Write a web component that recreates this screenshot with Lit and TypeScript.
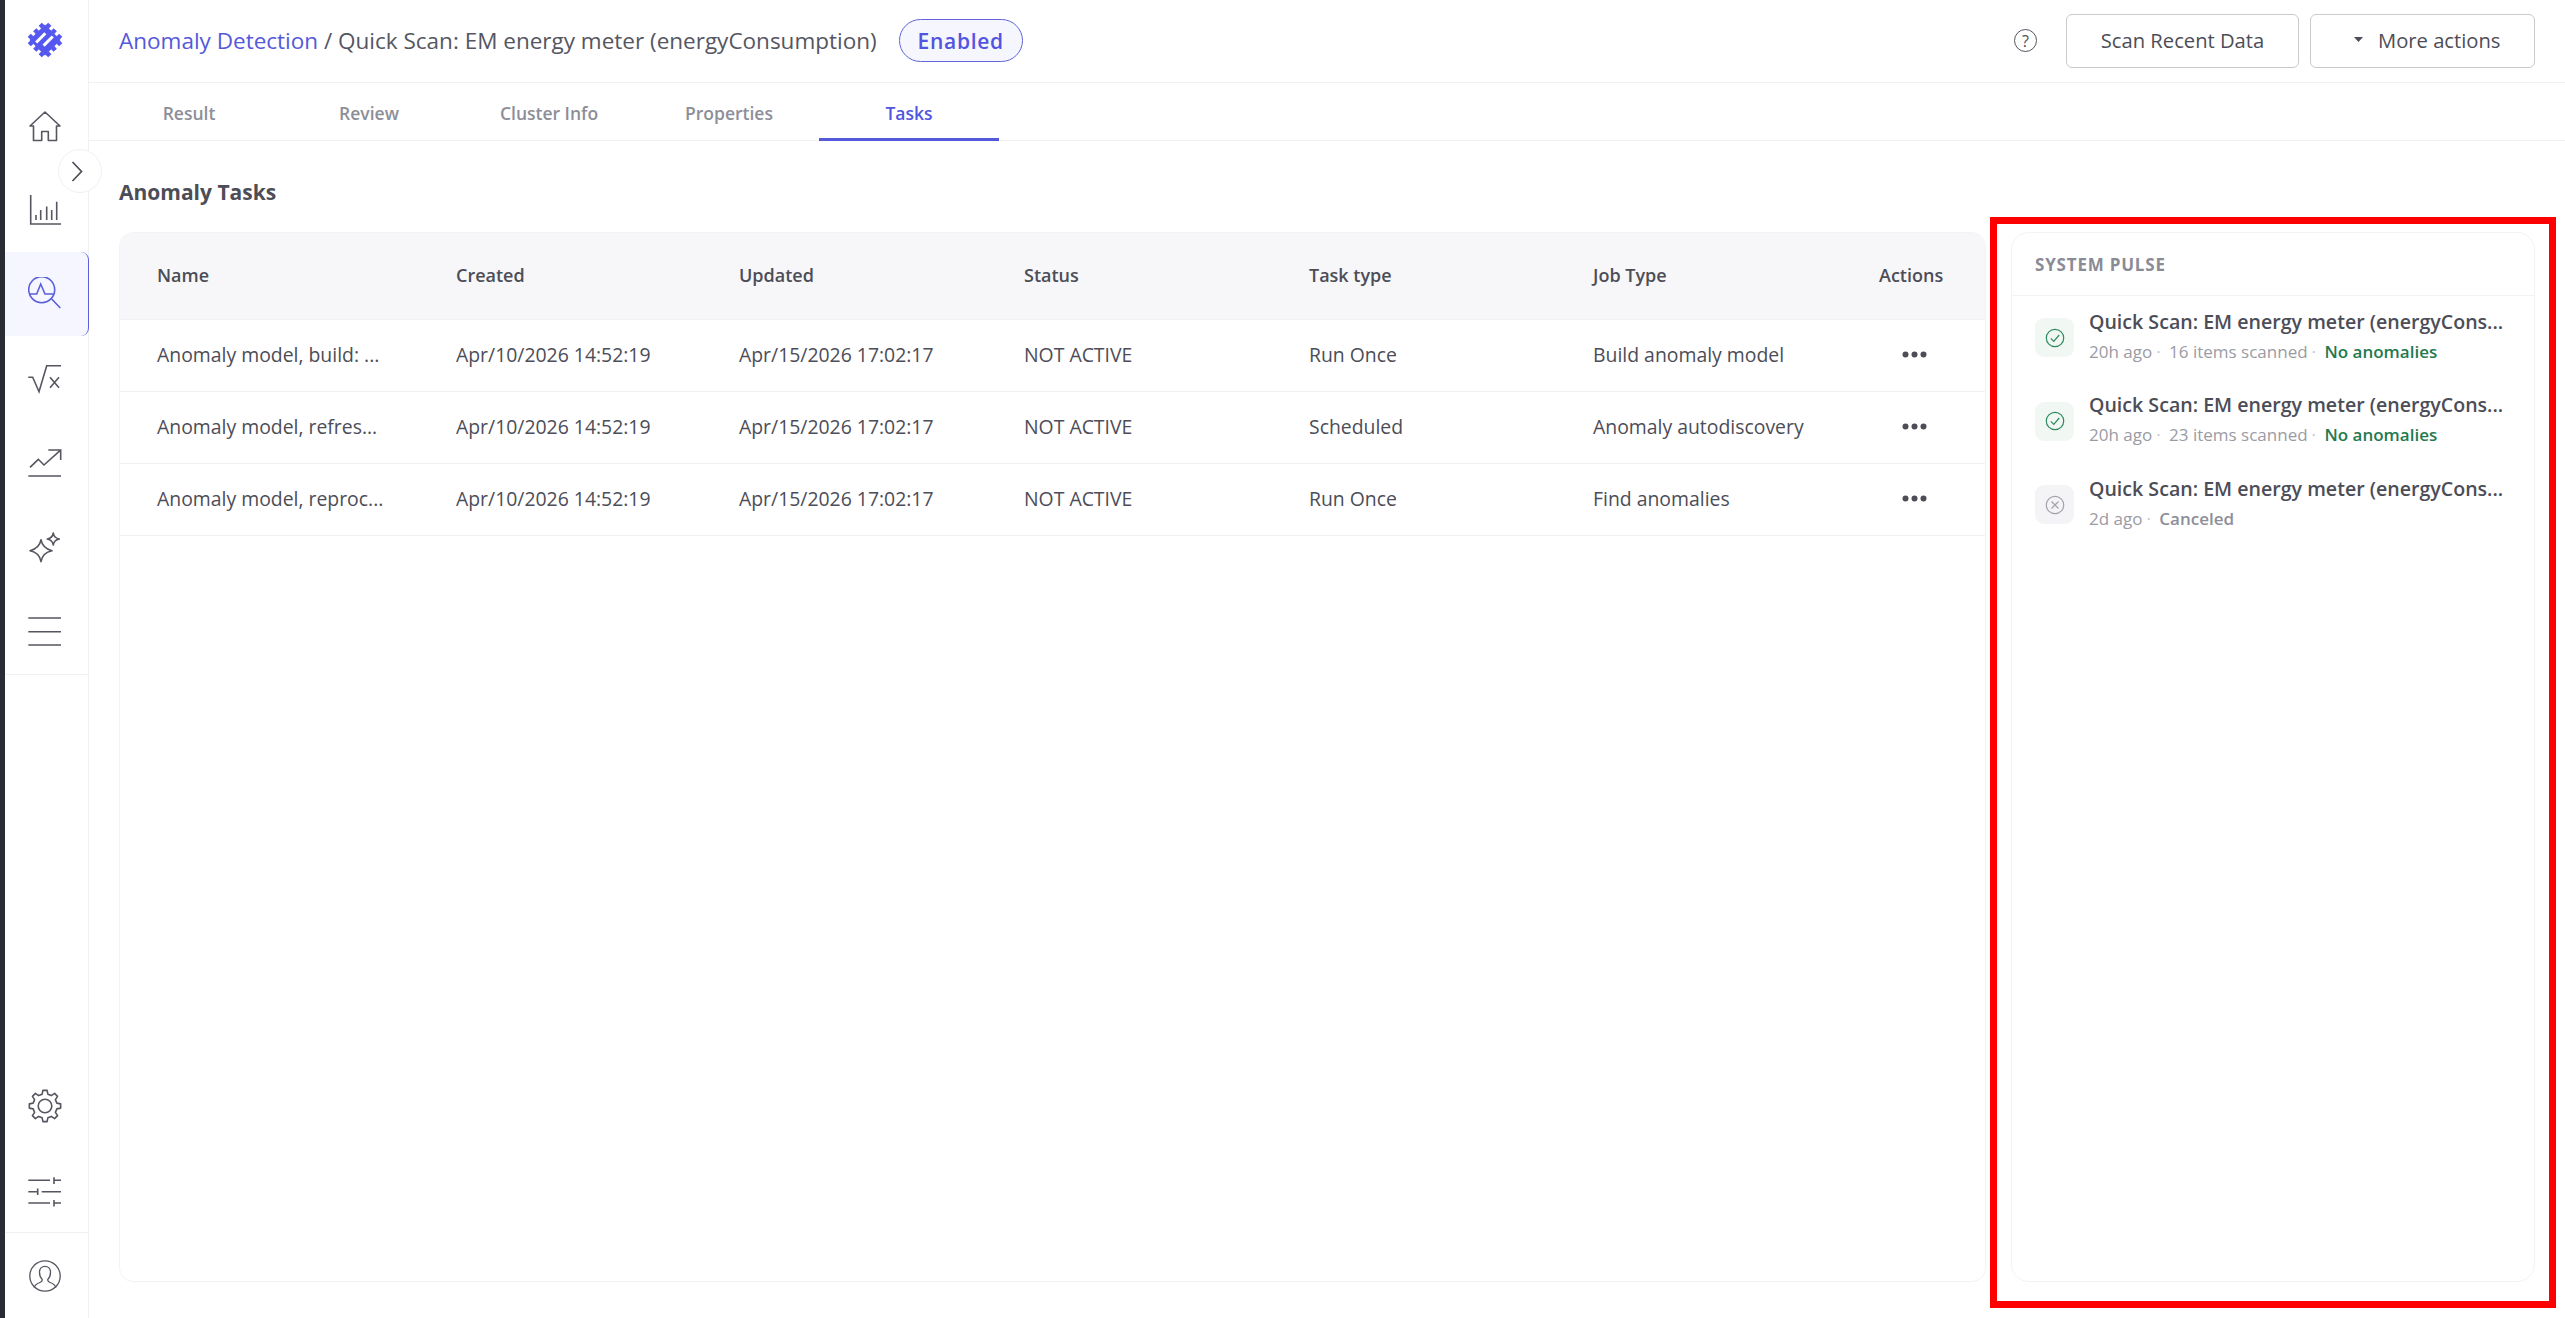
import { LitElement, html, css, svg } from 'lit';
import { customElement } from 'lit/decorators.js';

const TASKS = [
  { name: 'Anomaly model, build: ...', task: 'Run Once', job: 'Build anomaly model' },
  { name: 'Anomaly model, refres...', task: 'Scheduled', job: 'Anomaly autodiscovery' },
  { name: 'Anomaly model, reproc...', task: 'Run Once', job: 'Find anomalies' },
];

const PULSE = [
  { time: '20h ago', items: '16 items scanned', result: 'No anomalies', ok: true },
  { time: '20h ago', items: '23 items scanned', result: 'No anomalies', ok: true },
  { time: '2d ago', items: '', result: 'Canceled', ok: false },
];

// gear outline, 8 teeth around (17, 17)
function gearPath() {
  const pts: string[] = [];
  const n = 8;
  for (let i = 0; i < n; i++) {
    const a = (i / n) * Math.PI * 2 - Math.PI / 2;
    const step = (Math.PI * 2) / n;
    const spots: [number, number][] = [
      [12.2, a - step * 0.3],
      [15.8, a - step * 0.17],
      [15.8, a + step * 0.17],
      [12.2, a + step * 0.3],
    ];
    for (const [r, t] of spots) {
      pts.push(`${(17 + r * Math.cos(t)).toFixed(2)} ${(17 + r * Math.sin(t)).toFixed(2)}`);
    }
  }
  return 'M' + pts.join('L') + 'Z';
}

const icon = (body: unknown) => html`<svg class="nav-icon" viewBox="0 0 34 34" width="34" height="34" fill="none" stroke="currentColor" stroke-width="1.6">${body}</svg>`;

const ICONS = {
  home: icon(svg`<path d="M5.500 17H2L17 3l15 14h-3.500v14.500h-8.200v-9h-6.600v9H5.500z" stroke-linejoin="round" />`),
  chart: icon(svg`<path d="M2.700 2v29H33M8 27v-5M12.700 27V17M18.700 27V13.500M23.700 27V17M28.700 27V8.700" />`),
  search: icon(svg`<circle cx="13.700" cy="12.700" r="13" /><path d="M1.300 17h7.400l4-10 4.300 10h8.300M23.700 22l8.600 9" />`),
  sqrt: icon(svg`<path d="M.3 16.300h4.400L11 30.700l7.700-26H33M22 16.300l9 10.400M31 16.300 22 26.700" />`),
  trend: icon(svg`<path d="M.3 31H33M2 22.300l8.300-8 5.700 5.700L32 5.700M20.300 5h12.400v10" />`),
  sparkle: icon(svg`<path d="M13 10.700Q14.500 19.500 24 21.700 14.500 23.500 13 32.700 11.500 23.500 2 21.700 11.500 19.500 13 10.700zM25.300 4Q26 9 31.300 10 26 11 25.300 16 24.500 11 19.300 10 24.500 9 25.300 4z" stroke-linejoin="round" />`),
  menu: icon(svg`<path d="M.3 5H33M.3 18.700H33M.3 32H33" />`),
  gear: icon(svg`<path d=${gearPath()} stroke-linejoin="round" /><circle cx="17" cy="17" r="6.800" />`),
  sliders: icon(svg`<path d="M.3 6.300H22M26 3.300v6.600M26 6.300h7M.3 17.700h9.400M9.700 14.500v6.400M13.700 17.700H33M.3 29H22M26 26v6.600M26 29h7" />`),
  user: icon(svg`<circle cx="17" cy="17" r="15.200" stroke-width="1.300" /><path d="M6 28.500c1-3 3-4 6-5 2-.7 2.500-1.500 2.200-3-1.500-1.500-2.700-4-2.700-7.200 0-3.500 2.300-6 5.500-6s5.500 2.500 5.500 6c0 3.200-1.200 5.700-2.700 7.200-.3 1.500.2 2.300 2.200 3 3 1 5 2 6 5" stroke-width="1.300" />`),
};

@customElement('app-root')
export class AppRoot extends LitElement {
  static styles = css`
    :host {
      display: block;
      position: relative;
      height: 100vh;
      overflow: hidden;
      background: #fff;
      color: #4c4d57;
      font-family: 'Open Sans', sans-serif;
      font-size: 19.4px;
    }

    .app {
      display: flex;
      height: 100%;
    }

    .rail {
      width: 5px;
      flex: none;
      background: #2a2c33;
    }

    /* sidebar */
    .sidebar {
      width: 84px;
      flex: none;
      display: flex;
      flex-direction: column;
      border-right: 1px solid #f1f1f3;
      box-sizing: border-box;
      color: #55565f;
    }

    .logo {
      height: 84px;
      flex: none;
      display: flex;
      align-items: center;
      justify-content: center;
      padding: 0 3px 4px 0;
      box-sizing: border-box;
    }

    .nav {
      border-bottom: 1px solid #f1f1f3;
      padding-bottom: 2px;
    }

    .nav-item {
      height: 84px;
      display: flex;
      align-items: center;
      justify-content: center;
      padding-right: 3px;
      box-sizing: border-box;
    }

    .nav-item.active {
      background: #f5f6ff;
      color: #5a5fd8;
      border-right: 1.5px solid #5a5fd8;
      border-radius: 0 8px 8px 0;
      margin-right: -1px;
      padding-right: 2.5px;
    }

    .spacer {
      flex: 1;
    }

    .gear-item {
      padding-bottom: 2px;
    }

    .bottom-item {
      border-bottom: 1px solid #f1f1f3;
    }

    .bottom-item.last {
      border-bottom: none;
      height: 85px;
    }

    .collapse {
      position: absolute;
      left: 58px;
      top: 149px;
      width: 44px;
      height: 44px;
      padding-right: 6px;
      border-radius: 50%;
      border: 1px solid #f0f0f2;
      background: #fff;
      box-sizing: border-box;
      display: flex;
      align-items: center;
      justify-content: center;
      color: #4c4d57;
    }

    /* main */
    .main {
      flex: 1;
      min-width: 0;
      display: flex;
      flex-direction: column;
    }

    .header {
      height: 83px;
      flex: none;
      display: flex;
      align-items: center;
      padding: 0 30px 1px;
      border-bottom: 1px solid #f1f1f3;
      box-sizing: border-box;
    }

    .crumb {
      font-size: 22.5px;
      white-space: nowrap;
      color: #55565f;
      margin-top: -1px;
    }

    .crumb a {
      color: #5459d9;
    }

    .pill {
      margin-left: 22px;
      height: 43px;
      width: 124px;
      display: flex;
      align-items: center;
      justify-content: center;
      box-sizing: border-box;
      border: 1.5px solid #6064d6;
      border-radius: 22px;
      background: #f6f6ff;
      color: #5155e0;
      font-size: 21px;
      font-weight: 600;
      letter-spacing: 0.7px;
    }

    .header-right {
      margin-left: auto;
      display: flex;
      align-items: center;
    }

    .help {
      width: 23px;
      height: 23px;
      border: 1.3px solid #55565f;
      border-radius: 50%;
      box-sizing: border-box;
      display: flex;
      align-items: center;
      justify-content: center;
      font-size: 16px;
      line-height: 1;
      margin-right: 29px;
    }

    .btn {
      height: 54px;
      box-sizing: border-box;
      display: flex;
      align-items: center;
      justify-content: center;
      border: 1px solid #cacace;
      border-radius: 6px;
      font-size: 20.2px;
      padding-bottom: 2px;
      color: #4c4d57;
    }

    .btn.scan {
      width: 233px;
      margin-right: 11px;
    }

    .btn.more {
      width: 225px;
      gap: 15.5px;
      padding-left: 9px;
    }

    .tabs {
      height: 58px;
      flex: none;
      display: flex;
      padding-left: 10px;
      border-bottom: 1px solid #f1f1f3;
      box-sizing: border-box;
    }

    .tab {
      width: 180px;
      display: flex;
      align-items: center;
      justify-content: center;
      font-size: 17.5px;
      font-weight: 600;
      color: #8d8e98;
      box-sizing: border-box;
      margin-bottom: -1px;
      padding-top: 2px;
      border-top: 3px solid transparent;
      border-bottom: 3px solid transparent;
    }

    .tab.active {
      color: #5155e0;
      border-bottom-color: #5459d9;
    }

    .content {
      flex: 1;
      min-height: 0;
      display: flex;
      flex-direction: column;
      padding: 36px 30px 36px;
    }

    .title {
      font-size: 21px;
      font-weight: 700;
      line-height: 30px;
      margin: 0 0 25px;
    }

    .columns {
      flex: 1;
      min-height: 0;
      display: flex;
      gap: 25px;
    }

    /* tasks table */
    .table {
      flex: 1;
      min-width: 0;
      border: 1px solid #f3f3f5;
      border-radius: 14px;
      overflow: hidden;
    }

    .row {
      display: grid;
      grid-template-columns: 299px 283px 285px 285px 284px 286px 1fr;
      align-items: center;
      height: 72px;
      padding: 0 0 2px 37px;
      border-bottom: 1.5px solid #f2f2f4;
      box-sizing: border-box;
      white-space: nowrap;
    }

    .row.head {
      height: 87px;
      background: #f7f7f9;
      font-size: 18px;
      font-weight: 600;
      border-bottom: 1px solid #f1f1f3;
    }

    .dots {
      display: block;
      margin-left: 23px;
    }

    /* system pulse */
    .pulse {
      width: 524px;
      flex: none;
      border: 1px solid #f3f3f5;
      border-radius: 18px;
      box-sizing: border-box;
    }

    .pulse-head {
      height: 62px;
      display: flex;
      align-items: center;
      padding-left: 23px;
      border-bottom: 1px solid #f3f3f5;
      font-size: 17px;
      font-weight: 700;
      letter-spacing: 0.8px;
      color: #8a8b96;
    }

    .pulse-list {
      display: flex;
      flex-direction: column;
      gap: 29.5px;
      padding: 12.5px 23px 0 23px;
    }

    .pulse-item {
      display: flex;
      gap: 15px;
      min-width: 0;
    }

    .status {
      width: 39px;
      height: 39px;
      flex: none;
      margin-top: 9.5px;
      border-radius: 9px;
      display: flex;
      align-items: center;
      justify-content: center;
      background: #f1f7f3;
      color: #2e8b5f;
    }

    .status.off {
      background: #f4f4f6;
      color: #a2a3ab;
    }

    .pulse-text {
      min-width: 0;
      flex: 1;
    }

    .pulse-title {
      font-size: 19.6px;
      font-weight: 600;
      line-height: 26px;
      white-space: nowrap;
    }

    .pulse-meta {
      margin-top: 6px;
      font-size: 17px;
      line-height: 22px;
      color: #9a9ba4;
      white-space: nowrap;
    }

    .sep {
      margin: 0 4px;
      color: #c4c5ca;
    }

    .good {
      color: #1f7a4f;
      font-weight: 600;
    }

    .muted {
      font-weight: 600;
      color: #8d8e98;
    }

    /* review marker drawn over the panel */
    .marker {
      position: absolute;
      left: 1990px;
      top: 217px;
      width: 566px;
      height: 1091px;
      border: 7px solid #fe0000;
      box-sizing: border-box;
      pointer-events: none;
    }
  `;

  private navItem(body: unknown, active = false) {
    return html`<div class="nav-item ${active ? 'active' : ''}">${body}</div>`;
  }

  private renderSidebar() {
    return html`
      <aside class="sidebar">
        <div class="logo">
          <svg viewBox="0 0 36 36" width="36" height="36">
            <g transform="rotate(45 18 18)" fill="#5558f0">
              <rect x="7" y="7" width="22" height="22" />
              <rect x="8" y="3.500" width="4.500" height="4" />
              <rect x="15.750" y="3.500" width="4.500" height="4" />
              <rect x="23.500" y="3.500" width="4.500" height="4" />
              <rect x="8" y="28.500" width="4.500" height="4" />
              <rect x="15.750" y="28.500" width="4.500" height="4" />
              <rect x="23.500" y="28.500" width="4.500" height="4" />
              <rect x="3.500" y="8" width="4" height="4.500" />
              <rect x="3.500" y="15.750" width="4" height="4.500" />
              <rect x="3.500" y="23.500" width="4" height="4.500" />
              <rect x="28.500" y="8" width="4" height="4.500" />
              <rect x="28.500" y="15.750" width="4" height="4.500" />
              <rect x="28.500" y="23.500" width="4" height="4.500" />
              <rect x="12" y="13" width="3" height="13" fill="#fff" />
              <rect x="19.500" y="10" width="3" height="13" fill="#fff" />
            </g>
          </svg>
        </div>
        <nav class="nav">
          ${this.navItem(ICONS.home)}
          ${this.navItem(ICONS.chart)}
          ${this.navItem(ICONS.search, true)}
          ${this.navItem(ICONS.sqrt)}
          ${this.navItem(ICONS.trend)}
          ${this.navItem(ICONS.sparkle)}
          ${this.navItem(ICONS.menu)}
        </nav>
        <div class="spacer"></div>
        <div class="nav-item gear-item">${ICONS.gear}</div>
        <div class="nav-item bottom-item">${ICONS.sliders}</div>
        <div class="nav-item bottom-item last">${ICONS.user}</div>
      </aside>
    `;
  }

  private renderHeader() {
    return html`
      <header class="header">
        <div class="crumb"><a>Anomaly Detection</a> / Quick Scan: EM energy meter (energyConsumption)</div>
        <div class="pill">Enabled</div>
        <div class="header-right">
          <div class="help">?</div>
          <div class="btn scan">Scan Recent Data</div>
          <div class="btn more">
            <svg width="9" height="5" viewBox="0 0 9 5"><path d="M0 0h9L4.500 5z" fill="#4c4d57" /></svg>
            <span>More actions</span>
          </div>
        </div>
      </header>
    `;
  }

  private renderTable() {
    return html`
      <div class="table">
        <div class="row head">
          <span>Name</span><span>Created</span><span>Updated</span><span>Status</span>
          <span>Task type</span><span>Job Type</span><span>Actions</span>
        </div>
        ${TASKS.map(
          (t) => html`
            <div class="row">
              <span>${t.name}</span>
              <span>Apr/10/2026 14:52:19</span>
              <span>Apr/15/2026 17:02:17</span>
              <span>NOT ACTIVE</span>
              <span>${t.task}</span>
              <span>${t.job}</span>
              <svg class="dots" width="25" height="7" viewBox="0 0 25 7" fill="#4c4d57">
                <circle cx="3.500" cy="3.500" r="3" /><circle cx="12.500" cy="3.500" r="3" /><circle cx="21.500" cy="3.500" r="3" />
              </svg>
            </div>
          `
        )}
      </div>
    `;
  }

  private renderPulse() {
    return html`
      <section class="pulse">
        <div class="pulse-head">SYSTEM PULSE</div>
        <div class="pulse-list">
          ${PULSE.map(
            (p) => html`
              <div class="pulse-item">
                <div class="status ${p.ok ? '' : 'off'}">
                  <svg width="20" height="20" viewBox="0 0 20 20" fill="none" stroke="currentColor" stroke-width="1.2">
                    <circle cx="10" cy="10" r="8.700" />
                    ${p.ok ? svg`<path d="M5.800 10.300l3 3 5.400-6.300" />` : svg`<path d="M6.500 6.500l7 7M13.500 6.500l-7 7" />`}
                  </svg>
                </div>
                <div class="pulse-text">
                  <div class="pulse-title">Quick Scan: EM energy meter (energyCons...</div>
                  <div class="pulse-meta">
                    <span>${p.time}</span><span class="sep">·</span>
                    ${p.items ? html`<span>${p.items}</span><span class="sep">·</span>` : ''}
                    <span class=${p.ok ? 'good' : 'muted'}>${p.result}</span>
                  </div>
                </div>
              </div>
            `
          )}
        </div>
      </section>
    `;
  }

  render() {
    return html`
      <div class="app">
        <div class="rail"></div>
        ${this.renderSidebar()}
        <main class="main">
          ${this.renderHeader()}
          <div class="tabs">
            <div class="tab">Result</div>
            <div class="tab">Review</div>
            <div class="tab">Cluster Info</div>
            <div class="tab">Properties</div>
            <div class="tab active">Tasks</div>
          </div>
          <div class="content">
            <h2 class="title">Anomaly Tasks</h2>
            <div class="columns">
              ${this.renderTable()}
              ${this.renderPulse()}
            </div>
          </div>
        </main>
      </div>
      <div class="collapse">
        <svg width="12" height="21" viewBox="0 0 12 21" fill="none" stroke="currentColor" stroke-width="1.700"><path d="M1.500 1l9 9.500-9 9.500" /></svg>
      </div>
      <div class="marker"></div>
    `;
  }
}
